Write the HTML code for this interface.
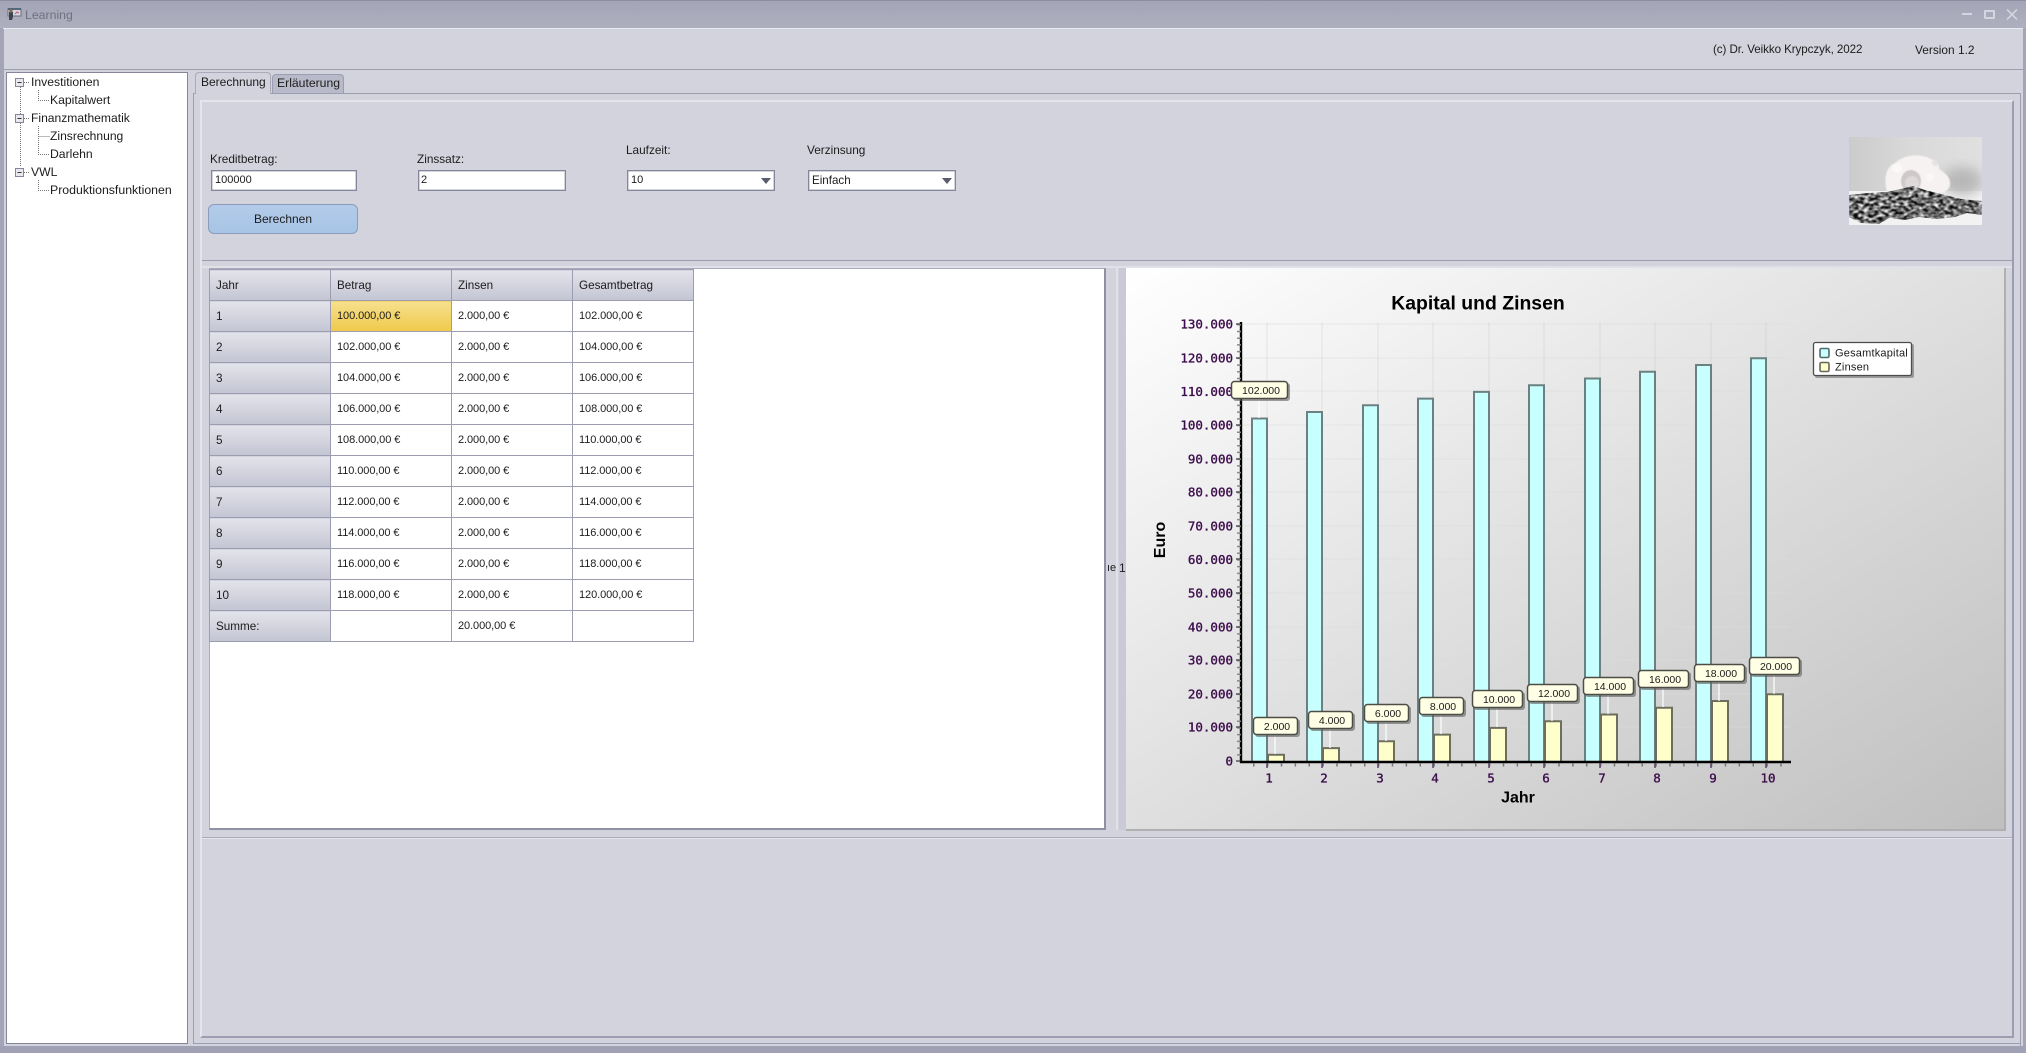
<!DOCTYPE html>
<html lang="de">
<head>
<meta charset="utf-8">
<title>Learning</title>
<style>
html,body{margin:0;padding:0;width:2026px;height:1053px;overflow:hidden;background:#d3d3de;font-family:"Liberation Sans",sans-serif;color:#1c1c1c}
.a{position:absolute;box-sizing:border-box}
.t{position:absolute;white-space:nowrap;line-height:16px;font-size:12px}
.inp{position:absolute;box-sizing:border-box;height:21px;background:#fff;border:1px solid #85869a;box-shadow:inset 0 0 0 .5px #a9aaba;font-size:11.6px;line-height:19px;padding-left:3px;white-space:nowrap}
.tri{position:absolute;width:0;height:0;border-left:5px solid transparent;border-right:5px solid transparent;border-top:6px solid #585c6c;top:7px;right:3px}
table{position:absolute;left:209px;top:269px;width:484px;table-layout:fixed;border-collapse:collapse;font-size:11px;color:#1c1c1c}
td{box-sizing:border-box;height:31px;padding:0 0 1px 6px;border:1px solid #9c9db0;background:#fff;white-space:nowrap;letter-spacing:-.08px}
td.h{background:linear-gradient(#e3e3eb,#c4c5d3);font-size:11.7px;letter-spacing:0;padding-bottom:0}
td.s{background:linear-gradient(#f6e08e,#efc94a)}
svg text{white-space:pre}
</style>
</head>
<body>
<!-- title bar -->
<div class="a" style="left:0;top:0;width:2026px;height:28px;background:linear-gradient(#a3a4b6,#aeafbe);border-top:1px solid #8d8ea2"></div>
<svg class="a" style="left:6px;top:7px" width="16" height="14" viewBox="0 0 16 14"><rect x="2" y="2" width="13" height="7" fill="#d6d6e0" stroke="#6a6e7e"/><path d="M2 1h13v2H2z" fill="#54687a"/><path d="M9 7l2-2 2 1" stroke="#c05a7a" fill="none"/><path d="M3 5h4v5l-1 3H3z" fill="#3e4552"/><circle cx="5" cy="4" r="1.7" fill="#8a6a50"/></svg>
<div class="t" style="left:25px;top:7px;color:#70717f;font-size:12.3px">Learning</div>
<div class="a" style="left:1962px;top:13px;width:10px;height:2px;background:#d5d5df"></div>
<div class="a" style="left:1984px;top:10px;width:11px;height:9px;border:2px solid #d5d5df;border-radius:1px"></div>
<svg class="a" style="left:2006px;top:9px" width="12" height="11" viewBox="0 0 12 11"><path d="M1 0.5L11 10.5M11 0.5L1 10.5" stroke="#d5d5df" stroke-width="1.6" fill="none"/></svg>

<!-- window frame -->
<div class="a" style="left:0;top:28px;width:4px;height:1025px;background:#a3a4b6"></div>
<div class="a" style="left:2023px;top:28px;width:3px;height:1025px;background:#a3a4b6"></div>
<div class="a" style="left:0;top:1046px;width:2026px;height:7px;background:#a0a1b4"></div>
<div class="a" style="left:3px;top:28px;width:2020px;height:1px;background:#e9e9f0"></div>
<div class="a" style="left:4px;top:69px;width:2019px;height:1px;background:#9c9db0"></div>
<div class="a" style="left:2020px;top:93px;width:1px;height:953px;background:#9c9db0"></div>
<div class="a" style="left:193px;top:1043px;width:1828px;height:1px;background:#9c9db0"></div>
<div class="a" style="left:193px;top:93px;width:1px;height:951px;background:#9c9db0"></div>

<div class="t" style="left:1713px;top:42px;font-size:11.6px;letter-spacing:-.07px">(c) Dr. Veikko Krypczyk, 2022</div>
<div class="t" style="left:1915px;top:42px;font-size:11.9px">Version 1.2</div>

<!-- tree -->
<div class="a" style="left:6px;top:72px;width:182px;height:972px;background:#fff;border:1px solid #85869a"></div>
<svg class="a" style="left:6px;top:72px" width="60" height="130" viewBox="0 0 60 130">
<g stroke="#777" stroke-dasharray="1 1" fill="none">
<path d="M14.5 15V95M18 10.5H24M18 46.5H24M18 100.5H24M32.5 18V28.5H44M32.5 54V82.5H44M32.5 64.5H44M32.5 108V118.5H44"/>
</g>
<g fill="#e8e8ee" stroke="#85869a"><rect x="9.5" y="6.5" width="8" height="8"/><rect x="9.5" y="42.5" width="8" height="8"/><rect x="9.5" y="96.5" width="8" height="8"/></g>
<path d="M11.5 10.5h4M11.5 46.5h4M11.5 100.5h4" stroke="#333" fill="none"/>
</svg>
<div class="t" style="left:31px;top:74px;font-size:12.2px">Investitionen</div>
<div class="t" style="left:50px;top:92px;font-size:12.2px">Kapitalwert</div>
<div class="t" style="left:31px;top:110px;font-size:12.1px">Finanzmathematik</div>
<div class="t" style="left:50px;top:128px;font-size:12.1px">Zinsrechnung</div>
<div class="t" style="left:50px;top:146px;font-size:12.2px">Darlehn</div>
<div class="t" style="left:31px;top:164px;font-size:12.2px">VWL</div>
<div class="t" style="left:50px;top:182px;font-size:12.3px">Produktionsfunktionen</div>

<!-- tabs -->
<div class="a" style="left:272px;top:74px;width:72px;height:20px;background:#b9bac9;border:1px solid #9c9db0;border-bottom:none;border-radius:4px 4px 0 0"></div>
<div class="a" style="left:193px;top:93px;width:1828px;height:1px;background:#9c9db0"></div>
<div class="a" style="left:195px;top:72px;width:76px;height:22px;background:#d3d3de;border:1px solid #a9aaba;border-bottom:none;border-radius:4px 4px 0 0"></div>
<div class="t" style="left:201px;top:74px;font-size:12px">Berechnung</div>
<div class="t" style="left:277px;top:75px;font-size:12.2px">Erläuterung</div>

<!-- inner panel -->
<div class="a" style="left:200px;top:100px;width:1814px;height:938px;border-top:2px solid #e4e4ec;border-left:2px solid #e4e4ec;border-right:2px solid #9c9db0;border-bottom:2px solid #9c9db0"></div>

<!-- form -->
<div class="t" style="left:210px;top:151px;font-size:11.8px">Kreditbetrag:</div>
<div class="inp" style="left:211px;top:170px;width:146px;font-size:11px">100000</div>
<div class="t" style="left:417px;top:151px;font-size:11.8px">Zinssatz:</div>
<div class="inp" style="left:418px;top:170px;width:148px;font-size:11px;padding-left:2px">2</div>
<div class="t" style="left:626px;top:142px;font-size:11.8px">Laufzeit:</div>
<div class="inp" style="left:627px;top:170px;width:148px;font-size:11px">10<div class="tri"></div></div>
<div class="t" style="left:807px;top:142px;font-size:11.8px">Verzinsung</div>
<div class="inp" style="left:808px;top:170px;width:148px">Einfach<div class="tri"></div></div>
<div class="a" style="left:208px;top:204px;width:150px;height:30px;border:1px solid #8b9cba;border-radius:6px;background:linear-gradient(#b3cbe9,#a7c4e6);font-size:12px;line-height:28px;text-align:center">Berechnen</div>

<!-- piggy image -->
<svg class="a" style="left:1849px;top:137px" width="133" height="88" viewBox="0 0 133 88">
<defs>
<linearGradient id="wall" x1="0" y1="0" x2="1" y2="0"><stop offset="0" stop-color="#cbcbcb"/><stop offset=".45" stop-color="#d9d9d9"/><stop offset="1" stop-color="#e0e0e0"/></linearGradient>
<filter id="coins" x="0" y="0" width="100%" height="100%" color-interpolation-filters="sRGB"><feTurbulence type="fractalNoise" baseFrequency=".2 .36" numOctaves="2" seed="7"/><feColorMatrix type="matrix" values="2.3 0 0 0 -.72  2.3 0 0 0 -.72  2.3 0 0 0 -.72  0 0 0 0 1"/><feGaussianBlur stdDeviation=".4"/></filter>
<filter id="soft" x="-30%" y="-30%" width="160%" height="160%"><feGaussianBlur stdDeviation="6"/></filter>
<filter id="soft2" x="-20%" y="-20%" width="140%" height="140%"><feGaussianBlur stdDeviation=".6"/></filter>
<clipPath id="heap"><path d="M0 58L20 56 38 55 52 52 64 49 76 53 96 58 112 62 133 64V78L118 76 106 80 88 82 70 80 56 83 40 81 30 87 12 86 0 80Z"/></clipPath>
</defs>
<rect width="133" height="88" fill="#f2f2f2"/>
<rect width="133" height="54" fill="url(#wall)"/>
<ellipse cx="113" cy="44" rx="20" ry="14" fill="#b8b8b8" filter="url(#soft)"/>
<g filter="url(#soft2)">
<path d="M39 58C34 44 36 30 46 26 56 17 72 16 84 23 88 24 90 28 90 32 96 36 102 40 101 48 100 54 94 56 88 56L50 62Z" fill="#f6f2f2"/>
<circle cx="48" cy="31" r="5" fill="#fbf8f8"/>
<circle cx="86" cy="26" r="3" fill="#e6e2e2"/>
<circle cx="81" cy="40" r="4" fill="#faf7f7"/>
<ellipse cx="62" cy="44" rx="10" ry="11" fill="#cfc8c8"/>
<ellipse cx="63" cy="46" rx="7" ry="7" fill="#dfd9d9"/>
</g>
<g clip-path="url(#heap)"><rect width="133" height="88" filter="url(#coins)"/></g>
</svg>

<!-- separators -->
<div class="a" style="left:202px;top:260px;width:1810px;height:1px;background:#9c9db0"></div>
<div class="a" style="left:202px;top:266px;width:1810px;height:2px;background:#e0e0e8"></div>
<div class="a" style="left:202px;top:837px;width:1810px;height:1px;background:#a9aabc"></div>
<div class="a" style="left:202px;top:838px;width:1810px;height:1px;background:#e4e4ec"></div>

<!-- table -->
<div class="a" style="left:209px;top:268px;width:897px;height:562px;background:#fff;border:1px solid #a9aaba;border-bottom:2px solid #8f90a4;border-right:2px solid #8f90a4"></div>
<table>
<colgroup><col style="width:121px"><col style="width:121px"><col style="width:121px"><col style="width:121px"></colgroup>
<tr><td class="h">Jahr</td><td class="h">Betrag</td><td class="h">Zinsen</td><td class="h">Gesamtbetrag</td></tr>
<tr><td class="h">1</td><td class="s">100.000,00 €</td><td>2.000,00 €</td><td>102.000,00 €</td></tr>
<tr><td class="h">2</td><td>102.000,00 €</td><td>2.000,00 €</td><td>104.000,00 €</td></tr>
<tr><td class="h">3</td><td>104.000,00 €</td><td>2.000,00 €</td><td>106.000,00 €</td></tr>
<tr><td class="h">4</td><td>106.000,00 €</td><td>2.000,00 €</td><td>108.000,00 €</td></tr>
<tr><td class="h">5</td><td>108.000,00 €</td><td>2.000,00 €</td><td>110.000,00 €</td></tr>
<tr><td class="h">6</td><td>110.000,00 €</td><td>2.000,00 €</td><td>112.000,00 €</td></tr>
<tr><td class="h">7</td><td>112.000,00 €</td><td>2.000,00 €</td><td>114.000,00 €</td></tr>
<tr><td class="h">8</td><td>114.000,00 €</td><td>2.000,00 €</td><td>116.000,00 €</td></tr>
<tr><td class="h">9</td><td>116.000,00 €</td><td>2.000,00 €</td><td>118.000,00 €</td></tr>
<tr><td class="h">10</td><td>118.000,00 €</td><td>2.000,00 €</td><td>120.000,00 €</td></tr>
<tr><td class="h">Summe:</td><td></td><td>20.000,00 €</td><td></td></tr>
</table>

<!-- splitter fragment -->
<div class="t" style="left:1107px;top:560px;font-size:11px">ıe</div>
<div class="a" style="left:1119px;top:268px;width:7px;height:562px;background:#c9cad6"></div>
<div class="a" style="left:1116px;top:268px;width:2px;height:562px;background:#e0e0e8"></div>
<div class="t" style="left:1119px;top:560px;font-size:12px">1</div>

<!-- chart -->
<svg class="a" style="left:0;top:0" width="2026" height="1053" viewBox="0 0 2026 1053">
<defs>
<linearGradient id="bg" x1="0" y1="0" x2="1" y2="1"><stop offset="0" stop-color="#ffffff"/><stop offset="1" stop-color="#bfbfbf"/></linearGradient>
</defs>
<rect x="1126" y="268" width="880" height="562" fill="url(#bg)" stroke="#b4b4b4" stroke-width="0"/>
<path d="M2005 268V830H1126" fill="none" stroke="#b0b0b0" stroke-width="2"/>

<!-- grid -->
<g stroke="#ffffff" stroke-opacity=".2" stroke-width="2" fill="none">
<path d="M1242 324H1790M1242 358H1790M1242 391H1790M1242 425H1790M1242 459H1790M1242 492H1790M1242 526H1790M1242 559H1790M1242 593H1790M1242 627H1790M1242 660H1790M1242 694H1790M1242 727H1790"/>
</g>
<g stroke="#9a9a9a" stroke-opacity=".09" stroke-width="2" fill="none">
<path d="M1242 324H1790M1242 358H1790M1242 391H1790M1242 425H1790M1242 459H1790M1242 492H1790M1242 526H1790M1242 559H1790M1242 593H1790M1242 627H1790M1242 660H1790M1242 694H1790M1242 727H1790"/>
<path d="M1267 322V761M1322 322V761M1378 322V761M1433 322V761M1489 322V761M1544 322V761M1600 322V761M1655 322V761M1711 322V761M1766 322V761"/>
</g>

<!-- bars cyan -->
<g fill="#c8ffff" stroke="#6b8080" stroke-width="2">
<path d="M1252 762V418.500H1267V762"/>
<path d="M1307 762V412H1322V762"/>
<path d="M1363 762V405.300H1378V762"/>
<path d="M1418 762V398.600H1433V762"/>
<path d="M1474 762V391.900H1489V762"/>
<path d="M1529 762V385.200H1544V762"/>
<path d="M1585 762V378.500H1600V762"/>
<path d="M1640 762V371.700H1655V762"/>
<path d="M1696 762V365H1711V762"/>
<path d="M1751 762V358.300H1766V762"/>
</g>
<!-- bars yellow -->
<g fill="#ffffcc" stroke="#6e6e5e" stroke-width="2">
<path d="M1268 762V754.800H1284V762"/>
<path d="M1323 762V748.100H1339V762"/>
<path d="M1378 762V741.300H1394V762"/>
<path d="M1434 762V734.600H1450V762"/>
<path d="M1490 762V727.900H1506V762"/>
<path d="M1545 762V721.200H1561V762"/>
<path d="M1601 762V714.500H1617V762"/>
<path d="M1656 762V707.700H1672V762"/>
<path d="M1712 762V701H1728V762"/>
<path d="M1767 762V694.300H1783V762"/>
</g>

<!-- connectors -->
<g stroke="#ffffff" stroke-opacity=".6" stroke-width="2" fill="none">
<path d="M1259 399V418M1275 735V754M1330 729V748M1386 722V741M1441 715V734M1497 708V727M1552 702V721M1608 695V714M1663 688V707M1719 682V701M1774 675V694"/>
</g>

<!-- axes -->
<path d="M1241 322V763" stroke="#000" stroke-width="2.4" fill="none"/>
<path d="M1240 762H1791" stroke="#000" stroke-width="2.4" fill="none"/>
<path d="M1239 324V761" stroke="#888" stroke-width="4" stroke-dasharray="1.500 5.220" fill="none"/>
<path d="M1236 324H1240M1236 358H1240M1236 391H1240M1236 425H1240M1236 459H1240M1236 492H1240M1236 526H1240M1236 559H1240M1236 593H1240M1236 627H1240M1236 660H1240M1236 694H1240M1236 727H1240M1236 761H1240" stroke="#555" stroke-width="1.400" fill="none"/>
<path d="M1253 765H1791" stroke="#777" stroke-width="3" stroke-dasharray="1.500 12.375" fill="none"/>
<path d="M1267 763V768M1322 763V768M1378 763V768M1433 763V768M1489 763V768M1544 763V768M1600 763V768M1655 763V768M1711 763V768M1766 763V768" stroke="#5a3f68" stroke-width="1.500" fill="none"/>

<!-- y labels -->
<g font-family="'DejaVu Sans Mono',monospace" font-size="12.500" fill="#3d0d4c" stroke="#3d0d4c" stroke-width=".35" text-anchor="end">
<text x="1233" y="328.500">130.000</text>
<text x="1233" y="362.500">120.000</text>
<text x="1233" y="396">110.000</text>
<text x="1233" y="429.500">100.000</text>
<text x="1233" y="463.500">90.000</text>
<text x="1233" y="496.500">80.000</text>
<text x="1233" y="530.500">70.000</text>
<text x="1233" y="564">60.000</text>
<text x="1233" y="597.500">50.000</text>
<text x="1233" y="631.500">40.000</text>
<text x="1233" y="664.500">30.000</text>
<text x="1233" y="698.500">20.000</text>
<text x="1233" y="731.500">10.000</text>
<text x="1233" y="765.500">0</text>
</g>
<!-- x labels -->
<g font-family="'DejaVu Sans Mono',monospace" font-size="12.500" fill="#3d0d4c" stroke="#3d0d4c" stroke-width=".35" text-anchor="middle">
<text x="1269" y="782.500">1</text><text x="1324" y="782.500">2</text><text x="1380" y="782.500">3</text><text x="1435" y="782.500">4</text><text x="1491" y="782.500">5</text><text x="1546" y="782.500">6</text><text x="1602" y="782.500">7</text><text x="1657" y="782.500">8</text><text x="1713" y="782.500">9</text><text x="1768" y="782.500">10</text>
</g>

<!-- titles -->
<text x="1478" y="309.500" text-anchor="middle" font-family="'Liberation Sans',sans-serif" font-size="19.400" font-weight="bold" fill="#000">Kapital und Zinsen</text>
<text x="1518" y="802.500" text-anchor="middle" font-family="'Liberation Sans',sans-serif" font-size="16" font-weight="bold" fill="#000">Jahr</text>
<text transform="translate(1165,540) rotate(-90)" text-anchor="middle" font-family="'Liberation Sans',sans-serif" font-size="16" font-weight="bold" fill="#000">Euro</text>

<!-- value labels -->
<g fill="#5f5f5f" fill-opacity=".6">
<rect x="1233" y="383" width="57" height="18" rx="3"/>
<rect x="1255" y="719" width="45" height="18" rx="3"/><rect x="1310" y="713" width="45" height="18" rx="3"/><rect x="1366" y="706" width="45" height="18" rx="3"/><rect x="1421" y="699" width="45" height="18" rx="3"/><rect x="1474" y="692" width="51" height="18" rx="3"/><rect x="1529" y="686" width="51" height="18" rx="3"/><rect x="1585" y="679" width="51" height="18" rx="3"/><rect x="1640" y="672" width="51" height="18" rx="3"/><rect x="1696" y="666" width="51" height="18" rx="3"/><rect x="1751" y="659" width="51" height="18" rx="3"/>
</g>
<g fill="#ffffe6" stroke="#4c4e46" stroke-width="1.500">
<rect x="1231.500" y="381.500" width="56" height="17" rx="3"/>
<rect x="1253.500" y="717.500" width="44" height="17" rx="3"/><rect x="1308.500" y="711.500" width="44" height="17" rx="3"/><rect x="1364.500" y="704.500" width="44" height="17" rx="3"/><rect x="1419.500" y="697.500" width="44" height="17" rx="3"/><rect x="1472.500" y="690.500" width="50" height="17" rx="3"/><rect x="1527.500" y="684.500" width="50" height="17" rx="3"/><rect x="1583.500" y="677.500" width="50" height="17" rx="3"/><rect x="1638.500" y="670.500" width="50" height="17" rx="3"/><rect x="1694.500" y="664.500" width="50" height="17" rx="3"/><rect x="1749.500" y="657.500" width="50" height="17" rx="3"/>
</g>
<g font-family="'Liberation Sans',sans-serif" font-size="10.500" fill="#1a1a1a" text-anchor="middle">
<text x="1261" y="394">102.000</text>
<text x="1277" y="730">2.000</text><text x="1332" y="724">4.000</text><text x="1388" y="717">6.000</text><text x="1443" y="710">8.000</text><text x="1499" y="703">10.000</text><text x="1554" y="697">12.000</text><text x="1610" y="690">14.000</text><text x="1665" y="683">16.000</text><text x="1721" y="677">18.000</text><text x="1776" y="670">20.000</text>
</g>

<!-- legend -->
<rect x="1815" y="344" width="99" height="34" rx="2" fill="#666" fill-opacity=".55"/>
<rect x="1813.500" y="342.500" width="98" height="33" rx="2" fill="#fff" stroke="#4c4c4c" stroke-width="1.300"/>
<rect x="1820" y="348.500" width="9" height="9" rx="1.500" fill="#c8ffff" stroke="#4f6a6a" stroke-width="1.600"/>
<rect x="1820" y="362.500" width="9" height="9" rx="1.500" fill="#ffffcc" stroke="#66665a" stroke-width="1.600"/>
<g font-family="'Liberation Sans',sans-serif" font-size="11" fill="#1a1a1a" letter-spacing=".2">
<text x="1835" y="356.500">Gesamtkapital</text>
<text x="1835" y="370.500">Zinsen</text>
</g>
</svg>
</body>
</html>
